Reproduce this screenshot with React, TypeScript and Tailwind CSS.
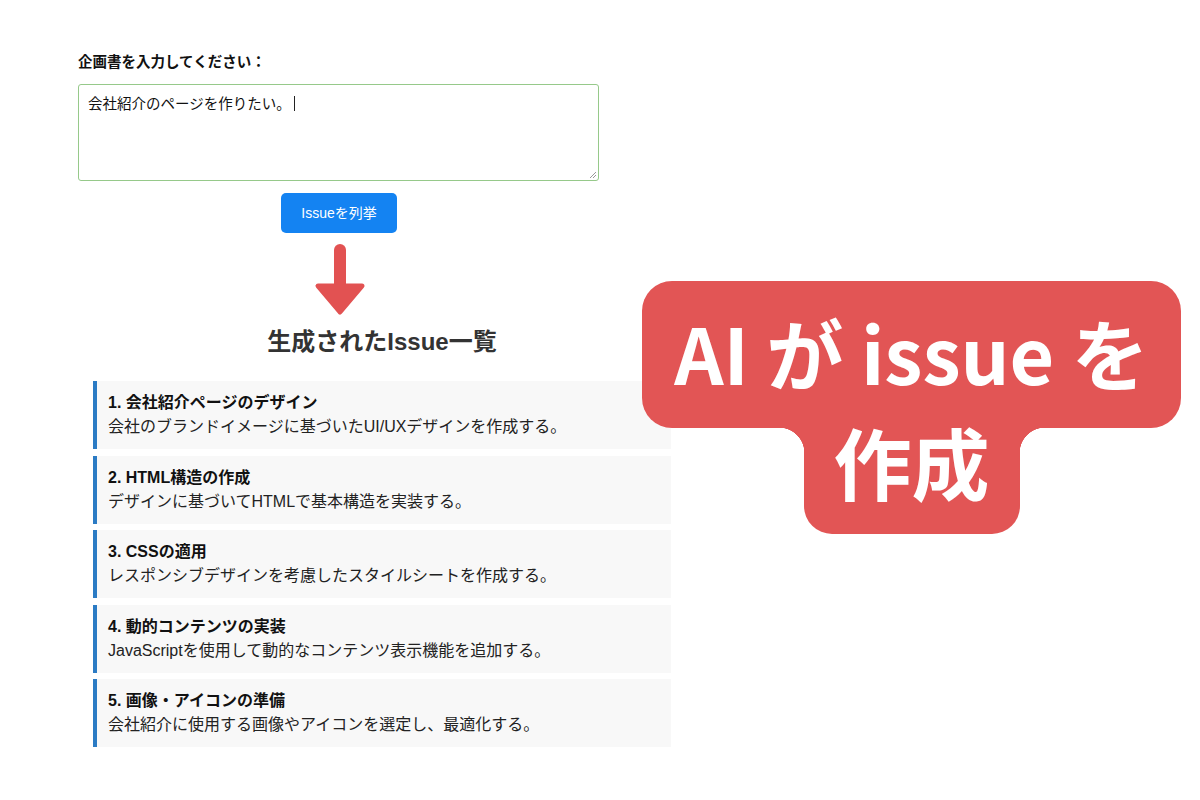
import React from 'react';

const issues = [
  { title: '1. 会社紹介ページのデザイン', desc: '会社のブランドイメージに基づいたUI/UXデザインを作成する。' },
  { title: '2. HTML構造の作成', desc: 'デザインに基づいてHTMLで基本構造を実装する。' },
  { title: '3. CSSの適用', desc: 'レスポンシブデザインを考慮したスタイルシートを作成する。' },
  { title: '4. 動的コンテンツの実装', desc: 'JavaScriptを使用して動的なコンテンツ表示機能を追加する。' },
  { title: '5. 画像・アイコンの準備', desc: '会社紹介に使用する画像やアイコンを選定し、最適化する。' },
];

export default function App() {
  return (
    <div className="relative w-[1200px] h-[800px] bg-white overflow-hidden font-['Liberation_Sans','Noto_Sans_CJK_JP',sans-serif] text-[#222]">
      <div className="pt-[53px] pl-[78px]">
        {/* Form */}
        <div className="w-[521px] flex flex-col">
          <label className="text-[14.5px] font-bold leading-[18px] text-[#111]">企画書を入力してください：</label>
          <div className="relative mt-[13px] h-[97px] rounded-[3px] border-[1.5px] border-[#96c98a] px-[9px] pt-[9px] text-[14.5px] leading-[20px] text-[#111]">
            会社紹介のページを作りたい。<span className="inline-block w-px h-[15px] bg-[#222] align-[-2px] ml-[3px]" />
            <svg className="absolute right-[1px] bottom-[1px]" width="8" height="8" viewBox="0 0 8 8">
              <path d="M7 1 L1 7 M7 4 L4 7" stroke="#999" strokeWidth="1" />
            </svg>
          </div>
          <div className="flex justify-center mt-[12px]">
            <button className="w-[116px] h-[40px] rounded-[5px] bg-[#1483f2] text-white text-[14px] ml-[1px]">
              Issueを列挙
            </button>
          </div>
          <div className="flex justify-center mt-[10px] ml-[2px]">
            <svg width="52" height="74" viewBox="0 0 52 74">
              <rect x="20" y="1" width="12" height="48" rx="6" fill="#e25252" />
              <path d="M4 43 L48 43 L26 69 Z" fill="#e25252" stroke="#e25252" strokeWidth="5" strokeLinejoin="round" />
            </svg>
          </div>
        </div>

        {/* Issue list */}
        <div className="w-[578px] ml-[15px] mt-[10px]">
          <h2 className="text-center text-[24px] font-bold leading-[30px] text-[#333]">生成されたIssue一覧</h2>
          <div className="mt-[24px] flex flex-col gap-[6.5px]">
            {issues.map((it) => (
              <div key={it.title} className="h-[68px] bg-[#f8f8f8] border-l-[4px] border-[#2b7bc4] pl-[11px] pt-[10px]">
                <p className="text-[16px] font-bold leading-[24px] text-[#111]">{it.title}</p>
                <p className="text-[16px] leading-[24px] text-[#222]">{it.desc}</p>
              </div>
            ))}
          </div>
        </div>
      </div>

      {/* Callout */}
      <div className="absolute left-[642px] top-[281px] w-[539px] flex flex-col items-center text-white font-['Noto_Sans_CJK_JP',sans-serif] font-bold">
        <div className="w-full h-[147px] rounded-[30px] bg-[#e25555] flex items-center justify-center text-[77px] leading-none pb-[6px]">
          AI が issue を
        </div>
        <div className="relative w-[216px] h-[106px] rounded-b-[28px] bg-[#e25555] flex justify-center text-[78px] leading-none pt-0">
          <span className="absolute -left-[25px] top-0 w-[25px] h-[25px] bg-[radial-gradient(circle_at_0_100%,transparent_25px,#e25555_25.5px)]" />
          <span className="absolute -right-[25px] top-0 w-[25px] h-[25px] bg-[radial-gradient(circle_at_100%_100%,transparent_25px,#e25555_25.5px)]" />
          <span className="-mt-[6px]">作成</span>
        </div>
      </div>
    </div>
  );
}
